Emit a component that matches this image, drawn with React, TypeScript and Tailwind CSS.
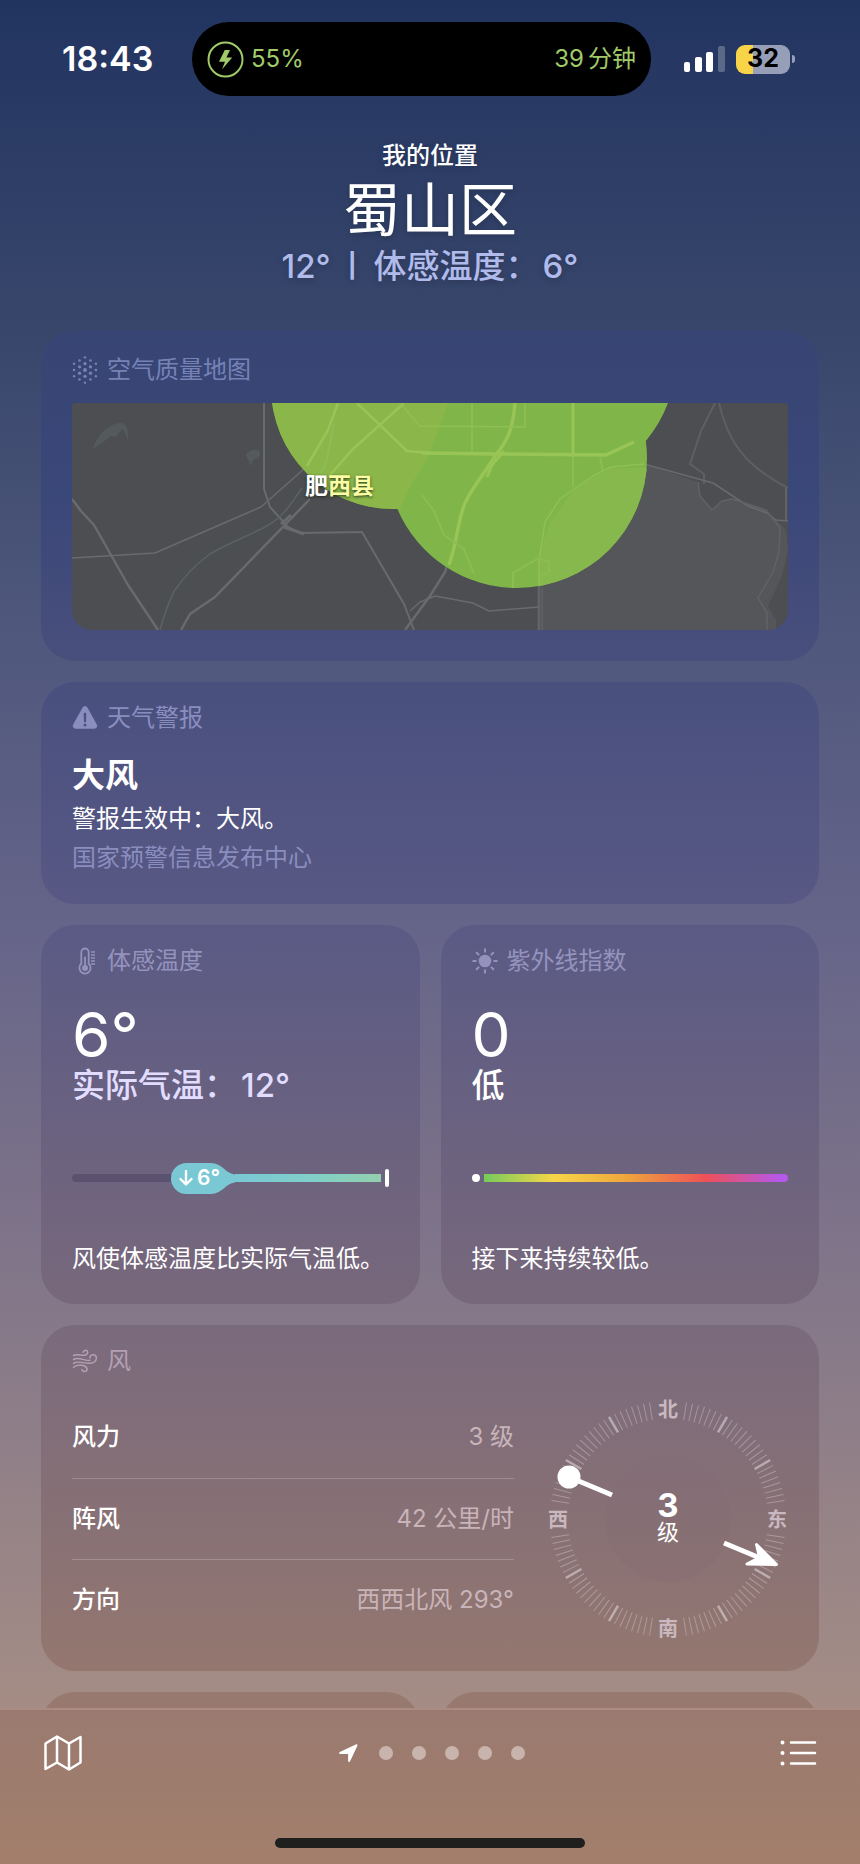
import React from 'react';

const circlePoints = (radius: number, count: number, offset = 0) =>
    Array.from({ length: count }, (_, i) => {
        const a = (i / count) * Math.PI * 2 + offset;
        return [14 + radius * Math.sin(a), 15 - radius * Math.cos(a)];
    });

const AirIcon: React.FC = () => (
    <svg className="h-[30px] w-[26px]" viewBox="0 0 28 30" fill="currentColor" aria-hidden="true">
        <circle cx="14" cy="15" r="2.1" />
        {circlePoints(6.8, 6).map(([x, y], i) => <circle key={i} cx={x} cy={y} r="1.8" />)}
        {circlePoints(11.8, 6, Math.PI / 6).map(([x, y], i) => <circle key={i} cx={x} cy={y} r="1.4" />)}
        {circlePoints(13.6, 6).map(([x, y], i) => <circle key={i} cx={x} cy={y} r="1.3" />)}
    </svg>
);

const AlertIcon: React.FC = () => (
    <svg className="h-[26px] w-[26px]" viewBox="0 0 26 26" aria-hidden="true">
        <path fill="currentColor" fillRule="evenodd" d="M10.6 2.6c1.1-1.9 3.7-1.9 4.8 0l9.4 17c1.1 1.9-.3 4.1-2.4 4.1H3.6c-2.1 0-3.5-2.2-2.4-4.1zM11.7 9l.3 7.4c0 1.2 2 1.2 2 0l.3-7.4c0-1.6-2.6-1.6-2.6 0zM13 18.4a1.5 1.5 0 1 0 0 3 1.5 1.5 0 0 0 0-3z" />
    </svg>
);

const ThermoIcon: React.FC = () => (
    <svg className="h-[28px] w-[26px]" viewBox="0 0 26 28" fill="none" stroke="currentColor" strokeWidth="1.8" aria-hidden="true">
        <path d="M9.3 5.2a3.7 3.7 0 0 1 7.4 0v11.6a5.6 5.6 0 1 1-7.4 0z" />
        <path d="M13 10.500v9" strokeLinecap="round" />
        <circle cx="13" cy="21" r="3" fill="currentColor" stroke="none" />
        <path d="M19 5h4M19 8h4M19 11h4M19 14h4M19 17h4" strokeWidth="1.300" />
    </svg>
);

const SunIcon: React.FC = () => (
    <svg className="h-[26px] w-[26px]" viewBox="0 0 26 26" fill="none" stroke="currentColor" strokeWidth="2" strokeLinecap="round" aria-hidden="true">
        <circle cx="13" cy="13" r="6.300" fill="currentColor" stroke="none" />
        <path d="M13 1.200v2.600M13 22.200v2.600M1.200 13h2.600M22.200 13h2.600M4.700 4.700l1.900 1.900M19.400 19.400l1.900 1.900M4.700 21.300l1.900-1.900M19.400 6.600l1.900-1.900" />
    </svg>
);

const WindIcon: React.FC = () => (
    <svg className="h-[24px] w-[26px]" viewBox="0 0 26 24" fill="none" stroke="currentColor" strokeWidth="1.500" strokeLinecap="round" aria-hidden="true">
        <path d="M1.500 6.500C6 4 9.500 7.500 13.500 6c3.500-1.400 2.300-5-.3-4.600-1.300.2-2 1-2.200 1.900" />
        <path d="M1.500 10.500C7 7 12 12.500 18 11.300" />
        <path d="M1.500 14.300C7 10.800 13 15.600 20 14c5.700-1.600 5.500-8.300 1.200-8.300-2.200 0-3.500 1.500-3.200 3.300" />
        <path d="M1.500 18.300C5 15.300 9 15.500 12.500 17c4 1.800 2.800 5.700-.1 5.500-1.500-.1-2.300-1-2.500-2" />
    </svg>
);

interface CardProps {
    icon: React.ReactNode;
    title: string;
    className: string;
    children: React.ReactNode;
}

const Card: React.FC<CardProps> = ({ icon, title, className, children }) => (
    <section className={`rounded-[34px] bg-linear-to-b px-[31px] ${className}`}>
        <h2 className="flex h-[30px] items-center gap-[9px] text-[24px] leading-[30px]">
            {icon}
            <span>{title}</span>
        </h2>
        {children}
    </section>
);

const AirMap: React.FC = () => (
    <svg
        className="mt-[18px] block h-[227px] w-full rounded-t-[3px] rounded-b-[20px] bg-[#4c4e51]"
        viewBox="0 0 716 227"
        preserveAspectRatio="xMidYMid slice"
        role="img"
        aria-label="空气质量地图"
    >
        <defs>
            <clipPath id="west">
                <path d="M150-10H380L355 57 340 80 326 110 150 130z" />
            </clipPath>
            <clipPath id="zones">
                <circle cx="321" cy="-16" r="122" />
                <circle cx="445" cy="55" r="130" />
                <circle cx="472" cy="-46" r="132" />
            </clipPath>
        </defs>

        {/* lakes */}
        <path fill="#545659" d="M465 227V160l10-40 28-38 34-17 35-4 54 18 2 14 12 14 10-9 10-2 34 11 20 20 2 20-6 26-14 30 8 14v30z" />
        <path fill="#545a5c" d="M21 46c4-14 16-26 28-26 5 1 8 5 7 17l-5-11-8 8-4-1-5 4z" />
        <path fill="#555b5d" d="M174 52c3-5 9-7 14-3 1 5-3 7-7 8l-2 6z" />

        <g fill="none" stroke="#686a6e" strokeLinejoin="round">
            <path strokeWidth="2" d="M192 0V86l6 18 18 20 12 6 62-1 42 72 10 26" />
            <path strokeWidth="1.500" d="M0 155l83-5 106-46 44-39" />
            <path strokeWidth="2.500" d="M0 96l9 12 13 14 34 60 30 45M109 227l9-16 25-17 95-98" />
            <path strokeWidth="1.500" stroke="#596366" d="M88 227c4-14 9-30 15-40 12-18 24-28 35-36 20-12 44-20 60-30 14-8 22-22 32-36" />
            <path strokeWidth="3" d="M209 121l10-9M212 124l20 7" />
            <path strokeWidth="2.500" d="M333 227l25-34 15-24 4-12" />
            <path strokeWidth="1.500" d="M338 208l10-9 15-6 38 7 16 8 50-4M467 180v47" />
            <path strokeWidth="2" stroke="#5d6063" d="M643 0l-14 28-11 33 14 10v10M647 0c8 36 24 62 69 85" />
            <path strokeWidth="1.500" d="M572 61l69 19 35 23 19 7 9 7 12 1M714 85v32" />
            <path strokeWidth="1.500" stroke="#606366" d="M470 185v42M626 79l2 14 12 14 10-9 10-2 34 11 14 18-1 24-6 20-15 26 9 15v26" />
        </g>

        <g clipPath="url(#zones)">
            <rect width="716" height="227" fill="#7fb549" />
            <path fill="#86b84d" d="M467 190V150l12-32 26-35 35-18h60v150z" />
            <circle cx="321" cy="-16" r="122" fill="#8bb74a" clipPath="url(#west)" />
            <g fill="none" stroke="#98c555" strokeLinejoin="round">
                <path strokeWidth="2.500" d="M285 0l50 48 23 2M266 0l-10 27-21 36M332 0l-52 47-42 48" />
                <path strokeWidth="3.500" d="M350 50l78 1 106 1 28-13M443 0c-2 26-8 39-20 53-10 17-22 30-30 47-7 16-8 40-16 62" />
                <path strokeWidth="3" d="M501 0v54M432 48l-12 14-5 12" />
                <path strokeWidth="1.500" stroke="#90c053" d="M328 0l20 23 105 1V0M400 0v50M501 54v30M528 55l3 14M467 185v-28l6-38 15-23 33-23 18-9 33-3" />
                <path strokeWidth="2" stroke="#8bbc55" d="M350 92l12 16 10 24 20 14 10 25M441 190v-20l24-14 12 2v10l-8 6M262 20l-8 40-12 24" />
            </g>
        </g>

        <text x="233" y="91" fontSize="23" fontWeight="700" fill="#fff" className="[text-shadow:0_1px_3px_rgba(30,40,20,0.9)]">
            肥<tspan fill="#fbfda4">西县</tspan>
        </text>
    </svg>
);

const ticks = Array.from({ length: 120 }, (_, i) => i * 3).filter((deg) => {
    const d = deg % 90;
    return d >= 9 && d <= 81;
});

const Compass: React.FC = () => (
    <svg className="h-60 w-60 shrink-0 overflow-visible" viewBox="0 0 240 240" role="img" aria-label="风向 293°">
        <circle cx="120" cy="120" r="63" fill="#7d686f" fillOpacity="0.15" />
        {ticks.map((deg) => (
            <line
                key={deg}
                x1="120"
                x2="120"
                y1="2"
                y2="20"
                stroke="#fff"
                strokeOpacity={deg % 30 === 0 ? 0.42 : 0.28}
                strokeWidth={deg % 30 === 0 ? 2.5 : 1}
                transform={`rotate(${deg} 120 120)`}
            />
        ))}
        <g fill="#c9b8bf" fontSize="20" fontWeight="700" textAnchor="middle">
            <text x="120" y="18">北</text>
            <text x="229" y="128">东</text>
            <text x="120" y="237">南</text>
            <text x="10" y="128">西</text>
        </g>
        <g fill="#fff" stroke="#fff">
            <circle cx="21" cy="78" r="11.500" stroke="none" />
            <path strokeWidth="5" d="M21 78l43 18M176 144l36 15" />
            <path strokeWidth="3" strokeLinejoin="round" d="M228.500 165.500L208.500 145.500l3 13-12.500 6.500z" />
        </g>
        <g fill="#fff" textAnchor="middle">
            <text x="120" y="118" fontSize="33" fontWeight="700">3</text>
            <text x="120" y="141" fontSize="22">级</text>
        </g>
    </svg>
);

const windRows = [
    { label: '风力', value: '3 级' },
    { label: '阵风', value: '42 公里/时' },
    { label: '方向', value: '西西北风 293°' },
];

const StatusBar: React.FC = () => (
    <div className="mt-[22px] grid h-[74px] shrink-0 grid-cols-[192fr_459fr_209fr] items-center">
        <time className="pl-[62px] text-[34px] leading-none font-semibold">18:43</time>
        <div className="flex h-full items-center rounded-full bg-black px-[15px] text-[24px] text-[#a1ca69]">
            <svg className="mr-[7px] h-[37px] w-[37px]" viewBox="0 0 37 37" aria-hidden="true">
                <circle cx="18.500" cy="18.500" r="17" fill="none" stroke="currentColor" strokeWidth="2" />
                <path fill="currentColor" d="M17.800 9h5.200l-3.600 7.600h5.800L15 28.500l3-7.700h-6z" />
            </svg>
            <span>55%</span>
            <span className="ml-auto">39<span className="ml-1">分钟</span></span>
        </div>
        <div className="flex items-center pl-8">
            <svg className="h-[27px] w-[43px]" viewBox="0 0 43 27" fill="#fff" aria-hidden="true">
                <rect x="1" y="16" width="6" height="10" rx="2" />
                <rect x="12" y="11" width="7" height="15" rx="2" />
                <rect x="23" y="6" width="7" height="20" rx="2" />
                <rect x="35" y="0" width="7" height="26" rx="2" fillOpacity="0.25" />
            </svg>
            <div className="ml-[10px] flex h-[29px] w-[54px] items-center justify-center rounded-[9px] bg-linear-to-r from-[#f8d548] from-32% to-[#969fb7] to-32% text-[25px] font-bold text-black">
                32
            </div>
            <span className="ml-[2px] h-2 w-[3px] rounded-r-full bg-[#969fb7]" />
        </div>
    </div>
);

const App: React.FC = () => {
    return (
        <div className="flex h-screen flex-col overflow-hidden font-['Inter','Noto_Sans_CJK_SC',sans-serif] text-white" lang="zh-CN">
            <div className="flex min-h-0 flex-1 flex-col overflow-hidden bg-linear-[180deg,#213460_0%,#38466b_19%,#52597e_39%,#656489_54%,#857889_77%,#a58d85_100%]">
                <StatusBar />

                <header className="mt-[45px] shrink-0 text-center [text-shadow:0_2px_6px_rgba(0,0,0,0.2)]">
                    <p className="text-[24px] leading-[30px] font-medium">我的位置</p>
                    <h1 className="mt-[3px] text-[58px] leading-[72px]">蜀山区</h1>
                    <p className="flex items-center justify-center text-[33px] leading-10 font-medium text-[#b0bbec]">
                        <span>12°</span>
                        <span className="mx-[17px] text-[24px] font-bold">|</span>
                        <span>体感温度：<span className="ml-1">6°</span></span>
                    </p>
                </header>

                <main className="mt-[45px] flex shrink-0 flex-col gap-[21px] px-[41px]">
                    <Card icon={<AirIcon />} title="空气质量地图" className="from-[#374574] via-[#3a4779] to-[#494f7c] pt-6 pb-[31px] text-[#7682b5]">
                        <AirMap />
                    </Card>

                    <Card icon={<AlertIcon />} title="天气警报" className="from-[#49507e] to-[#585884] pt-[21px] pb-[27px] text-[#8a8ebf]">
                        <h3 className="mt-[22px] text-[33px] leading-10 font-bold text-white">大风</h3>
                        <p className="mt-1 text-[24px] leading-[39px] text-white">警报生效中：大风。</p>
                        <p className="text-[24px] leading-[39px]">国家预警信息发布中心</p>
                    </Card>

                    <div className="grid grid-cols-2 gap-[21px]">
                        <Card icon={<ThermoIcon />} title="体感温度" className="from-[#5a5a85] to-[#78687b] pt-[21px] pb-[30px] text-[#9593bd]">
                            <p className="mt-[28px] text-[62px] leading-[62px] text-white">6°</p>
                            <p className="text-[33px] leading-[38px] font-medium text-[#e2dcff]">实际气温：<span className="ml-1">12°</span></p>
                            <div className="mt-[58px] flex h-8 items-center">
                                <span className="h-2 w-[99px] rounded-l-full bg-[#5a526e]" />
                                <span className="relative flex h-[31px] w-16 items-center gap-1 pl-2 text-[21px] font-semibold text-white">
                                    <svg className="absolute inset-0 h-full w-full" viewBox="0 0 64 31" aria-hidden="true">
                                        <path fill="#7ac8d4" d="M15.500 0H40c11 0 15 11 24 11.500v8C55 20 51 31 40 31H15.500a15.500 15.500 0 0 1 0-31z" />
                                    </svg>
                                    <svg className="relative h-4 w-[14px] shrink-0" viewBox="0 0 14 16" fill="none" stroke="currentColor" strokeWidth="2.400" strokeLinecap="round" strokeLinejoin="round" aria-hidden="true">
                                        <path d="M7 1v13M1.500 9L7 14.500 12.500 9" />
                                    </svg>
                                    <span className="relative">6°</span>
                                </span>
                                <span className="h-2 flex-1 bg-linear-to-r from-[#7ac8d4] via-[#80cfca] to-[#92d0ad]" />
                                <span className="ml-1 h-[18px] w-1 rounded-full bg-white" />
                            </div>
                            <p className="mt-[50px] text-[24px] leading-[30px] whitespace-nowrap text-white">风使体感温度比实际气温低。</p>
                        </Card>

                        <Card icon={<SunIcon />} title="紫外线指数" className="from-[#5a5a85] to-[#78687b] pt-[21px] pb-[30px] text-[#9593bd]">
                            <p className="mt-[28px] text-[62px] leading-[62px] text-white">0</p>
                            <p className="text-[33px] leading-[38px] font-medium text-white">低</p>
                            <div className="mt-[58px] flex h-8 items-center gap-[4px]">
                                <span className="h-2 w-2 rounded-full bg-white" />
                                <span className="h-2 flex-1 rounded-r-full bg-linear-[90deg,#75cb5b_0%,#f7d648_23%,#efa83c_46%,#ee5058_73%,#b658e8_97%]" />
                            </div>
                            <p className="mt-[50px] text-[24px] leading-[30px] text-white">接下来持续较低。</p>
                        </Card>
                    </div>

                    <Card icon={<WindIcon />} title="风" className="from-[#7a6a7d] via-[#867076] to-[#94776f] pt-[21px] pb-[31px] text-[#b3a0b3]">
                        <div className="mt-[21px] flex items-center gap-[34px]">
                            <table className="flex-1 border-collapse text-[24px] leading-[30px]">
                                <tbody>
                                    {windRows.map((row) => (
                                        <tr key={row.label} className="h-[81px] border-b border-white/20 last:border-b-0">
                                            <th scope="row" className="text-left font-medium text-white">{row.label}</th>
                                            <td className="text-right text-[#c9b4ba]">{row.value}</td>
                                        </tr>
                                    ))}
                                </tbody>
                            </table>
                            <Compass />
                        </div>
                    </Card>

                    <div className="grid grid-cols-2 gap-[21px]">
                        <div className="h-20 rounded-[34px] bg-[#98796f]" />
                        <div className="h-20 rounded-[34px] bg-[#98796f]" />
                    </div>
                </main>
            </div>

            <footer className="flex h-[156px] shrink-0 flex-col items-center justify-between border-t-2 border-[#ab8c82] bg-linear-to-b from-[#9a7a70] to-[#a37f6b] pb-4">
                <nav className="mt-6 flex w-full items-center justify-between px-[43px]">
                    <button type="button" aria-label="地图">
                        <svg className="h-[38px] w-10" viewBox="0 0 40 38" fill="none" stroke="#fff" strokeWidth="2.500" strokeLinejoin="round" aria-hidden="true">
                            <path d="M2.500 9.500L14 2.500l12 7 11.500-6.500v25.500L26 35.500l-12-7L2.500 35zM14 2.500v26M26 9.500v26" />
                        </svg>
                    </button>
                    <div className="flex items-center gap-[19px]">
                        <svg className="mr-[2px] h-[19px] w-5" viewBox="0 0 20 19" fill="#fff" aria-hidden="true">
                            <path d="M17.800.400c1.200-.6 2 .2 1.600 1.300l-7.300 15.600c-.5 1.200-2 .9-2-.3V9.900H2.200c-1.300 0-1.600-1.400-.4-2z" />
                        </svg>
                        {[1, 2, 3, 4, 5].map((page) => (
                            <span key={page} className="h-[14px] w-[14px] rounded-full bg-[#c8b4ac]" />
                        ))}
                    </div>
                    <button type="button" aria-label="列表">
                        <svg className="h-[28px] w-[38px]" viewBox="0 0 38 28" stroke="#fff" strokeLinecap="round" aria-hidden="true">
                            <path strokeWidth="2.500" d="M12 3.500h24M12 14h24M12 24.500h24" />
                            <path strokeWidth="4" d="M3.500 3.500h.01M3.500 14h.01M3.500 24.500h.01" />
                        </svg>
                    </button>
                </nav>
                <div className="h-[10px] w-[36%] rounded-full bg-[#1f1f1e]" />
            </footer>
        </div>
    );
};

export default App;
